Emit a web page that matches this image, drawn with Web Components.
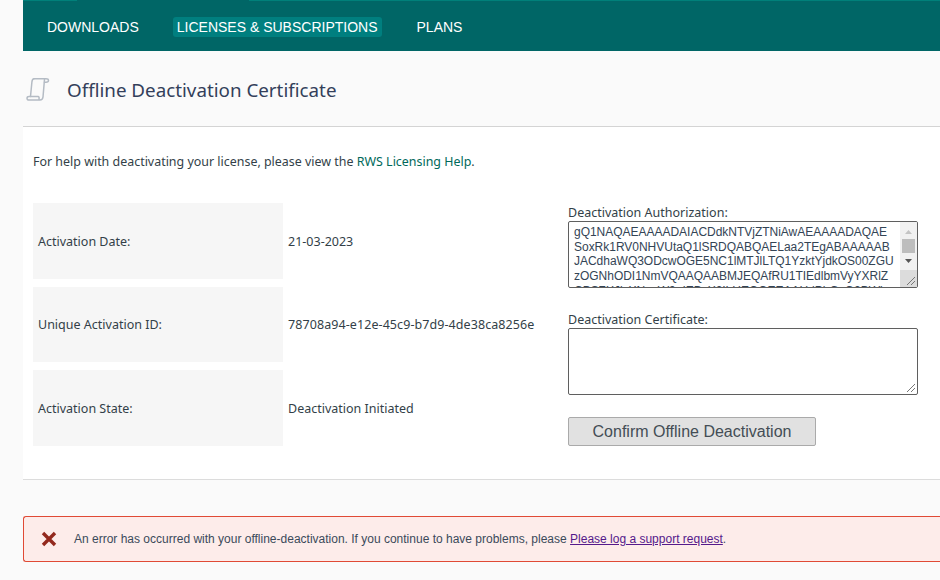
<!DOCTYPE html>
<html><head><meta charset="utf-8"><style>
html,body{margin:0;padding:0;background:#fafafa;overflow:hidden}
body{width:940px;height:580px;font-family:"Noto Sans","Open Sans",sans-serif;font-size:13px;color:#333f48}
</style></head><body>
<app-shell>
<top-nav>
<nav-item>DOWNLOADS</nav-item><nav-item active>LICENSES &amp; SUBSCRIPTIONS</nav-item><nav-item style="margin-left:1px">PLANS</nav-item>
</top-nav>
<page-title>Offline Deactivation Certificate</page-title>
<deact-panel></deact-panel>
<error-alert>An error has occurred with your offline-deactivation. If you continue to have problems, please <a href="#" style="color:#551a8b">Please log a support request</a>.</error-alert>
</app-shell>
<script>
function def(name,html,setup){customElements.define(name,class extends HTMLElement{constructor(){super();this.attachShadow({mode:'open'}).innerHTML=html;if(setup)setup(this.shadowRoot)}})}
def('top-nav',`<style>:host{display:flex;box-sizing:border-box;height:51px;margin-left:23px;background:linear-gradient(90deg,#00807a 54px,transparent 54px,transparent 226px,#00807a 226px) top/100% 1px no-repeat,#006666;padding:0 0 0 20px;align-items:center;gap:30px}</style><slot></slot>`);
def('nav-item',`<style>:host{display:block;font:14px "Liberation Sans",Arial,sans-serif;color:#fff;padding:0 4px;height:20px;line-height:20px;margin:3px 0 0;border-radius:3px;white-space:nowrap}:host([active]){background:#007f7f}</style><slot></slot>`);
def('page-title',`<style>:host{display:flex;box-sizing:border-box;height:76px;margin-left:23px;align-items:center;border-bottom:1px solid #d4d4d4;background:#fafafa;color:#333f5a;font-size:18.800px}svg{width:24px;height:24px;margin:0 17px 0 3px;flex:none}span{position:relative;top:1px}</style><svg viewBox="0 0 24 24" fill="none" stroke="#b4bbc4" stroke-width="1.500" stroke-linejoin="round" stroke-linecap="round"><path d="M8 1.800H20c1.500 0 2.500.6 2.500 1.700S21.500 5.200 20 5.200h-1.500"/><path d="M8 1.800C6.500 1.800 6.100 3 5.900 5L4.500 19.500"/><path d="M18.500 2.200 17 20c-.2 2-1.500 3-3 3H3.200c-1.500 0-2.200-.8-2.200-1.800s.7-1.700 2.200-1.700h8.800c1 0 1.300 1 1 2.500"/></svg><span><slot></slot></span>`);
def('info-row',`<style>:host{display:flex;align-items:center;height:76px;font-size:12.500px}.l{box-sizing:border-box;width:250px;height:100%;background:#f6f6f6;padding-left:5px;display:flex;align-items:center}.v{padding-left:5px;white-space:nowrap}</style><div class="l"><slot name="l"></slot></div><div class="v"><slot></slot></div>`);
def('deact-panel',`<style>
:host{display:block;box-sizing:border-box;height:353px;margin-left:23px;background:#fff;border-bottom:1px solid #dcdcdc;padding:26px 0 0 10px;font-size:12.500px;color:#333f48}
p{margin:0;line-height:17px;font-size:12.450px}a{color:#00695a;text-decoration:none}
.cols{display:flex;margin-top:33px}
.left{display:flex;flex-direction:column;gap:8px;width:535px;flex:none}
.right{display:flex;flex-direction:column;width:350px;padding-top:1px}
label{display:block;line-height:17px}
.ta{box-sizing:border-box;width:350px;height:67px;border:1px solid #5f5f5f;border-radius:2px;background:#fff;position:relative;overflow:hidden}
.txt{font:12px/14.700px "Liberation Sans",Arial,sans-serif;letter-spacing:-.02px;color:#334455;padding:3px 0 0 5px;white-space:nowrap;width:325px;overflow:hidden}
.sb{position:absolute;right:0;top:0;bottom:0;width:17px;background:#f1f1f1}
.sb i{position:absolute;left:2px;width:13px;background:#bdbdbd;top:17px;height:14px}
.sb svg{position:absolute;left:5px;width:7px;height:4px}
.corner{position:absolute;right:0;bottom:0;width:17px;height:17px;background:#dcdcdc}
.grip{position:absolute;right:1px;bottom:1px;width:10px;height:10px}
button{box-sizing:border-box;width:248px;height:29px;margin-top:22px;border:1px solid #aaa;border-radius:2px;background:#e1e1e1;font:16px "Liberation Sans",Arial,sans-serif;color:#444d55;padding:0}
</style>
<p>For help with deactivating your license, please view the <a href="#">RWS Licensing Help</a>.</p>
<div class="cols"><div class="left">
<info-row><span slot="l">Activation Date:</span>21-03-2023</info-row>
<info-row style="height:75px"><span slot="l">Unique Activation ID:</span><span style="letter-spacing:.08px">78708a94-e12e-45c9-b7d9-4de38ca8256e</span></info-row>
<info-row><span slot="l">Activation State:</span>Deactivation Initiated</info-row>
</div><div class="right">
<label>Deactivation Authorization:</label>
<div class="ta"><div class="txt">gQ1NAQAEAAAADAIACDdkNTVjZTNiAwAEAAAADAQAE<br>SoxRk1RV0NHVUtaQ1lSRDQABQAELaa2TEgABAAAAAB<br>JACdhaWQ3ODcwOGE5NC1lMTJlLTQ1YzktYjdkOS00ZGU<br>zOGNhODI1NmVQAAQAABMJEQAfRU1TIEdlbmVyYXRlZ<br>CBSZXJlcXNpcW9uIEByX2ILHEQOEEAAHdPbGxQ2BWj</div>
<div class="sb"><svg style="top:8px" viewBox="0 0 7 4"><path d="M3.500 0 7 4H0z" fill="#c4c4c4"/></svg><i></i><svg style="top:37px" viewBox="0 0 7 4"><path d="M0 0h7L3.500 4z" fill="#555"/></svg></div>
<div class="corner"></div><svg class="grip" viewBox="0 0 10 10" stroke="#777" stroke-width="1"><path d="M1 9 9 1M5 9l4-4"/></svg></div>
<label style="margin-top:23px">Deactivation Certificate:</label>
<div class="ta"><svg class="grip" viewBox="0 0 10 10" stroke="#777" stroke-width="1"><path d="M1 9 9 1M5 9l4-4"/></svg></div>
<button>Confirm Offline Deactivation</button>
</div></div>`);
def('error-alert',`<style>:host{display:flex;box-sizing:border-box;height:46px;margin:36px 0 0 23px;align-items:center;background:#fdecea;border:1px solid #e04a35;border-right:0;border-radius:3px 0 0 3px;font:12px "Liberation Sans",Arial,sans-serif;color:#3b4a5a}svg{width:16px;height:16px;margin:0 17px 0 17px;flex:none}</style><svg viewBox="0 0 16 16"><path d="M2 2l12 12M14 2 2 14" stroke="#93291e" stroke-width="3.400"/></svg><span><slot></slot></span>`);
def('app-shell',`<style>:host{display:block}</style><slot></slot>`);
</script>
</body></html>
